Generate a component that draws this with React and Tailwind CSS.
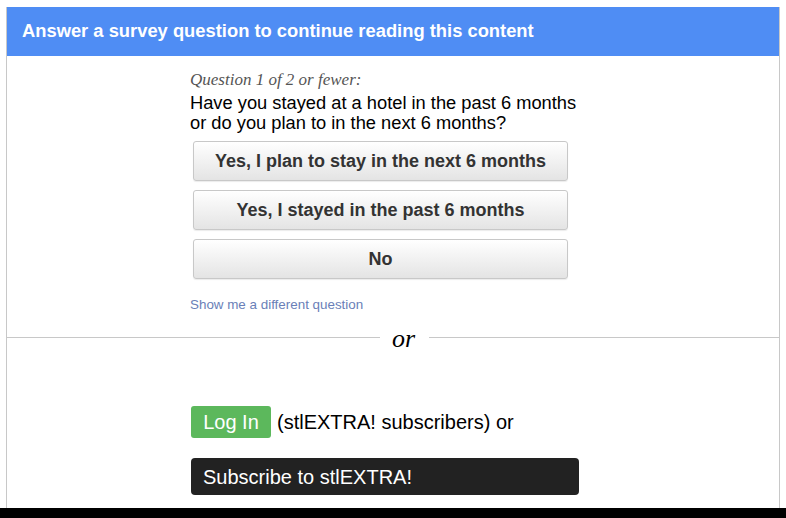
export default function App() {
  const btn =
    "ml-[3px] w-[375px] h-[40px] flex items-center justify-center rounded-[3px] border border-[#c8c8c8] bg-gradient-to-b from-[#ffffff] to-[#e4e4e4] text-[18px] font-bold text-[#333333] shadow-[0_1px_1px_rgba(0,0,0,0.08)]";
  return (
    <div className="w-[786px] h-[518px] bg-white flex flex-col overflow-hidden" style={{ fontFamily: '"Liberation Sans", Arial, sans-serif' }}>
      <div className="flex-1 pt-[7px] pl-[6px] pr-[6px] flex flex-col">
        <div className="flex-1 flex flex-col border-x border-[#c8c8c8]">
          <div className="h-[49px] bg-[#4f8df4] flex items-center pl-[15px]">
            <span className="text-white text-[18.35px] font-bold leading-none">Answer a survey question to continue reading this content</span>
          </div>
          <div className="pl-[183px] pt-[14px] flex flex-col">
            <div className="text-[17px] italic text-[#555] leading-[20px]" style={{ fontFamily: '"Liberation Serif", Georgia, serif' }}>
              Question 1 of 2 or fewer:
            </div>
            <div className="text-[18.3px] text-black leading-[20px] mt-[3px]">
              Have you stayed at a hotel in the past 6 months<br />or do you plan to in the next 6 months?
            </div>
            <div className="mt-[8px] flex flex-col gap-[9px]">
              <div className={btn}>Yes, I plan to stay in the next 6 months</div>
              <div className={btn}>Yes, I stayed in the past 6 months</div>
              <div className={btn}>No</div>
            </div>
            <div className="mt-[18px] text-[13.4px] leading-[16px] text-[#6a7fb8]">Show me a different question</div>
          </div>
          <div className="mt-[16px] flex items-center h-[16px]">
            <div className="w-[373px] h-px bg-[#c8c8c8]"></div>
            <span className="pl-[12px] pr-[14px] text-[26px] italic text-black leading-none mt-[4px]" style={{ fontFamily: '"Liberation Serif", Georgia, serif' }}>or</span>
            <div className="flex-1 h-px bg-[#c8c8c8]"></div>
          </div>
          <div className="pl-[184px] pt-[61px] flex flex-col">
            <div className="flex items-center">
              <div className="h-[32px] w-[80px] rounded-[3px] bg-[#5cb85c] text-white text-[20px] flex items-center justify-center">Log In</div>
              <span className="ml-[6px] text-[20px] text-black">(stlEXTRA! subscribers) or</span>
            </div>
            <div className="mt-[20px] w-[388px] h-[37px] rounded-[4px] bg-[#222222] text-white text-[20px] flex items-center pl-[12px]">
              Subscribe to stlEXTRA!
            </div>
          </div>
        </div>
      </div>
      <div className="h-[10px] bg-black"></div>
    </div>
  );
}
